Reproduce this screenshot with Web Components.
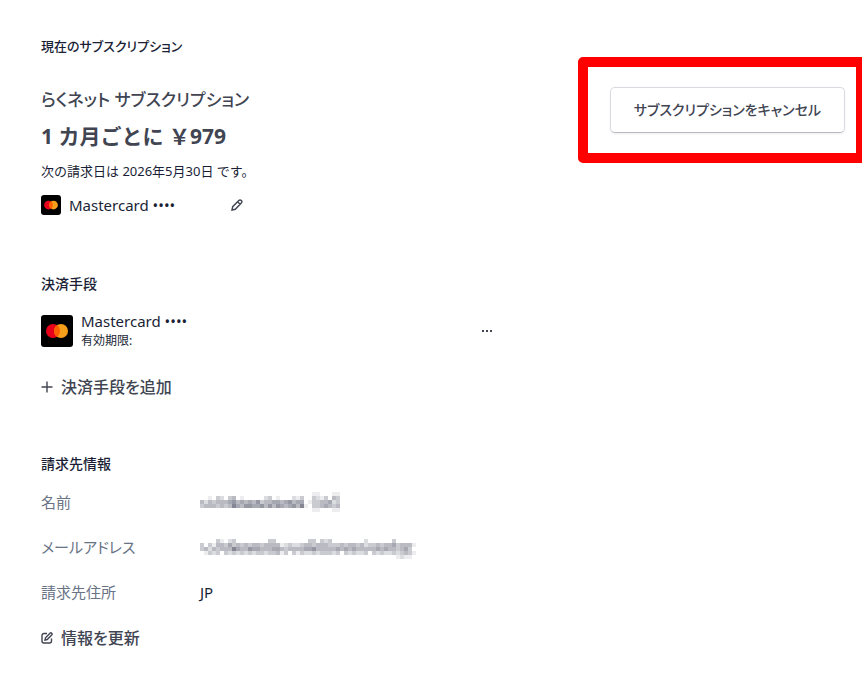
<!DOCTYPE html>
<html lang="ja">
<head>
<meta charset="utf-8">
<meta name="viewport" content="width=device-width, initial-scale=1">
<title>サブスクリプション</title>
<style>
    body {
        margin: 0;
        overflow-x: hidden;
        background: #fff;
        color: #1a1f36;
        font-family: "Noto Sans", "Noto Sans CJK JP", sans-serif;
        font-size: 15px;
        line-height: 24px;
        font-feature-settings: "palt";
    }
</style>
</head>
<body>
<billing-page>
    <billing-section heading="現在のサブスクリプション" compact>
        <current-plan name="らくネット サブスクリプション" price="1 カ月ごとに ￥979" note="次の請求日は 2026年5月30日 です。" card="Mastercard ••••">
            <cancel-button>サブスクリプションをキャンセル</cancel-button>
        </current-plan>
    </billing-section>
    <billing-section heading="決済手段">
        <payment-method name="Mastercard ••••" expiry="有効期限:"></payment-method>
        <action-link icon="plus">決済手段を追加</action-link>
    </billing-section>
    <billing-section heading="請求先情報">
        <billing-details>
            <detail-row label="名前"><masked-value kind="name"></masked-value></detail-row>
            <detail-row label="メールアドレス"><masked-value kind="email"></masked-value></detail-row>
            <detail-row label="請求先住所">JP</detail-row>
        </billing-details>
        <action-link icon="edit">情報を更新</action-link>
    </billing-section>
</billing-page>

<script>
const ICONS = {
    plus: '<path d="M6 0.5v11M0.5 6h11"/>',
    edit: '<path d="M6 1.5H3A2 2 0 0 0 1 3.5V9a2 2 0 0 0 2 2h5.500a2 2 0 0 0 2-2V6.500M4 8l.5-2.200L9 1.200a1.100 1.100 0 0 1 1.700 1.700L6.200 7.500z"/>',
    pencil: '<path d="M1 11l.7-3.300L7.800 1.600a1.600 1.600 0 0 1 2.500 2.500L4.300 10.300zM6.600 2.800l2.500 2.500"/>'
};

// cells of the masked values, 0 = white, 9 = darkest
const MASKS = {
    name: [
        '00000000000000000000000000001100011',
        '00103203401000002301000213003213043',
        '42434445645454634455456455013344523',
        '34443434754665564646545647103345434',
        '00000000000000000000000000001100011'
    ],
    email: [
        '000000000000000000000000000000000000000000000000000000',
        '000031023000000003300000000330323000000002000000300000',
        '303144353434344344441232234434443334344342334344534441',
        '342434447544655444554344445564444454545444445454434530',
        '013230323232323323341303132232333230323223032322323431',
        '000000000000000000000000000000000000000000000000012110'
    ]
};

function icon(name) {
    return `<svg width="12" height="12" viewBox="0 0 12 12" fill="none" stroke="currentColor" stroke-width="1.400" aria-hidden="true">${ICONS[name]}</svg>`;
}

class BillingPage extends HTMLElement {
    constructor() {
        super();
        this.attachShadow({ mode: 'open' });
    }

    connectedCallback() {
        this.shadowRoot.innerHTML = `
            <style>
                :host { display: block; padding: 34px 17px 40px 41px; }
                main { display: flex; flex-direction: column; gap: 53px; }
            </style>
            <main><slot></slot></main>
        `;
    }
}

class BillingSection extends HTMLElement {
    constructor() {
        super();
        this.attachShadow({ mode: 'open' });
    }

    connectedCallback() {
        this.shadowRoot.innerHTML = `
            <style>
                :host { display: block; }
                h2 { margin: 0; font-size: 14px; line-height: 24px; font-weight: 500; }
                :host([compact]) h2 { font-size: 13px; }
            </style>
            <h2>${this.getAttribute('heading')}</h2>
            <slot></slot>
        `;
    }
}

class CardLogo extends HTMLElement {
    constructor() {
        super();
        this.attachShadow({ mode: 'open' });
    }

    connectedCallback() {
        const size = this.getAttribute('size');
        this.shadowRoot.innerHTML = `
            <style>
                :host { display: block; flex: none; }
                svg { display: block; border-radius: 3px; }
            </style>
            <svg width="${size}" height="${size}" viewBox="0 0 32 32" role="img" aria-label="Mastercard">
                <rect width="32" height="32"/>
                <circle cx="12" cy="16" r="7" fill="#eb001b"/>
                <circle cx="20" cy="16" r="7" fill="#f79e1b"/>
                <path d="M16 10.250a7 7 0 0 1 0 11.500a7 7 0 0 1 0-11.500z" fill="#ff5f00"/>
            </svg>
        `;
    }
}

class CurrentPlan extends HTMLElement {
    constructor() {
        super();
        this.attachShadow({ mode: 'open' });
    }

    connectedCallback() {
        this.shadowRoot.innerHTML = `
            <style>
                :host { display: flex; justify-content: space-between; align-items: flex-start; padding: 28px 0 2px; }
                p { margin: 0; }
                .name { font-size: 17px; line-height: 28px; font-weight: 500; color: #414552; }
                .price { font-size: 21px; line-height: 45px; font-weight: 700; color: #414552; font-feature-settings: normal; }
                .note { font-size: 13px; line-height: 24px; font-feature-settings: normal; }
                .card { display: flex; align-items: center; gap: 8px; padding-top: 10px; width: 202px; }
                button { margin-left: auto; padding: 0; border: 0; background: none; color: #414552; display: flex; }
            </style>
            <div>
                <p class="name">${this.getAttribute('name')}</p>
                <p class="price">${this.getAttribute('price')}</p>
                <p class="note">${this.getAttribute('note')}</p>
                <div class="card">
                    <card-logo size="20"></card-logo>
                    <span>${this.getAttribute('card')}</span>
                    <button type="button" aria-label="編集">${icon('pencil')}</button>
                </div>
            </div>
            <slot></slot>
        `;
    }
}

class CancelButton extends HTMLElement {
    constructor() {
        super();
        this.attachShadow({ mode: 'open' });
    }

    connectedCallback() {
        this.shadowRoot.innerHTML = `
            <style>
                :host { display: block; position: relative; margin-top: 1px; }
                /* highlight frame drawn over the page */
                :host::after {
                    content: "";
                    position: absolute;
                    inset: -30px -21px -30px -32px;
                    border: 10px solid #f00;
                    border-radius: 5px;
                    pointer-events: none;
                }
                button {
                    display: block;
                    padding: 10px 23px;
                    border: 1px solid #d8dae0;
                    border-bottom-color: #b8bbc4;
                    border-radius: 5px;
                    background: #fff;
                    box-shadow: 0 1px 2px rgba(0, 0, 0, 0.08);
                    color: #414552;
                    font: inherit;
                    font-feature-settings: inherit;
                    font-size: 14px;
                    font-weight: 500;
                    white-space: nowrap;
                }
            </style>
            <button type="button"><slot></slot></button>
        `;
    }
}

class PaymentMethod extends HTMLElement {
    constructor() {
        super();
        this.attachShadow({ mode: 'open' });
    }

    connectedCallback() {
        this.shadowRoot.innerHTML = `
            <style>
                :host { display: flex; align-items: center; gap: 8px; max-width: 452px; padding: 15px 0 14px; }
                p { margin: 0; line-height: 20px; }
                .expiry { font-size: 12px; }
                button { margin-left: auto; padding: 0; border: 0; background: none; color: #414552; display: flex; }
            </style>
            <card-logo size="32"></card-logo>
            <div>
                <p>${this.getAttribute('name')}</p>
                <p class="expiry">${this.getAttribute('expiry')}</p>
            </div>
            <button type="button" aria-label="その他">
                <svg width="12" height="4" viewBox="0 0 12 4" fill="currentColor" aria-hidden="true"><path d="M1 1h2v2H1zM5 1h2v2H5zM9 1h2v2H9z"/></svg>
            </button>
        `;
    }
}

class ActionLink extends HTMLElement {
    constructor() {
        super();
        this.attachShadow({ mode: 'open' });
    }

    connectedCallback() {
        this.shadowRoot.innerHTML = `
            <style>
                :host { display: block; padding-top: 10px; }
                a { display: inline-flex; align-items: center; gap: 8px; color: #414552; font-size: 16px; font-weight: 500; text-decoration: none; }
            </style>
            <a href="#">${icon(this.getAttribute('icon'))}<slot></slot></a>
        `;
    }
}

class BillingDetails extends HTMLElement {
    constructor() {
        super();
        this.attachShadow({ mode: 'open' });
    }

    connectedCallback() {
        this.shadowRoot.innerHTML = `
            <style>
                :host { display: flex; flex-direction: column; gap: 21px; padding: 14px 0 12px; }
            </style>
            <slot></slot>
        `;
    }
}

class DetailRow extends HTMLElement {
    constructor() {
        super();
        this.attachShadow({ mode: 'open' });
    }

    connectedCallback() {
        this.shadowRoot.innerHTML = `
            <style>
                :host { display: grid; grid-template-columns: 159px 1fr; align-items: center; }
                .label { color: #687385; }
            </style>
            <span class="label">${this.getAttribute('label')}</span>
            <span><slot></slot></span>
        `;
    }
}

class MaskedValue extends HTMLElement {
    constructor() {
        super();
        this.attachShadow({ mode: 'open' });
    }

    connectedCallback() {
        const rows = MASKS[this.getAttribute('kind')];
        const rects = [];
        rows.forEach((row, y) => {
            [...row].forEach((level, x) => {
                if (level !== '0') {
                    rects.push(`<rect x="${x * 4}" y="${y * 4}" width="4" height="4" fill-opacity="${level / 13}"/>`);
                }
            });
        });
        this.shadowRoot.innerHTML = `
            <style>
                :host { display: block; }
                svg { display: block; }
            </style>
            <svg width="${rows[0].length * 4}" height="${rows.length * 4}" fill="#1a1f36" shape-rendering="crispEdges" aria-hidden="true">${rects.join('')}</svg>
        `;
    }
}

customElements.define('card-logo', CardLogo);
customElements.define('cancel-button', CancelButton);
customElements.define('current-plan', CurrentPlan);
customElements.define('payment-method', PaymentMethod);
customElements.define('action-link', ActionLink);
customElements.define('masked-value', MaskedValue);
customElements.define('detail-row', DetailRow);
customElements.define('billing-details', BillingDetails);
customElements.define('billing-section', BillingSection);
customElements.define('billing-page', BillingPage);
</script>
</body>
</html>
